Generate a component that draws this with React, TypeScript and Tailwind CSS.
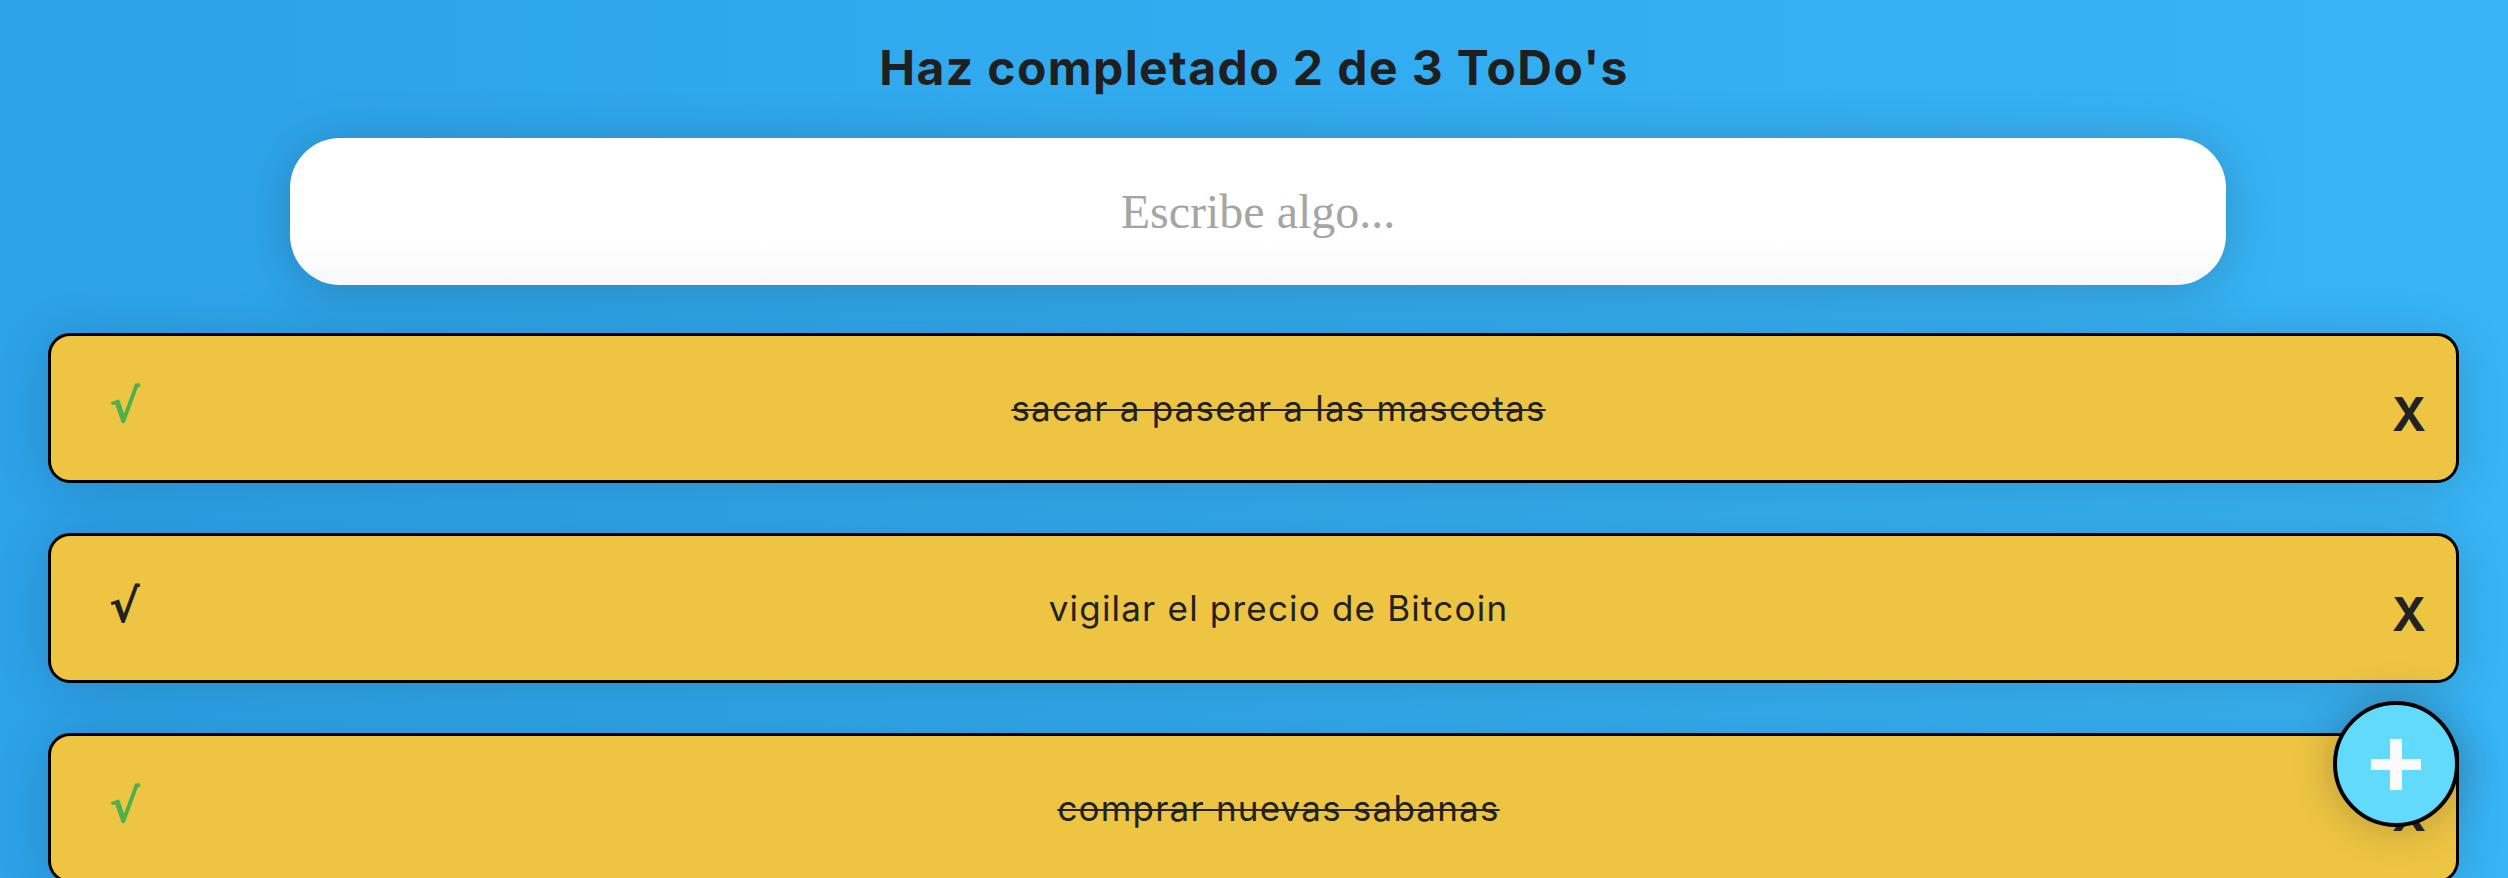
import React from "react";

type Todo = { text: string; completed: boolean };

const todos: Todo[] = [
  { text: "sacar a pasear a las mascotas", completed: true },
  { text: "vigilar el precio de Bitcoin", completed: false },
  { text: "comprar nuevas sabanas", completed: true },
];

function TodoItem({ todo }: { todo: Todo }) {
  return (
    <li className="flex h-[150px] items-center rounded-[22px] border-[3px] border-black bg-[#eec542] pl-[58px] pr-[32px] shadow-[0_5px_50px_rgba(32,35,41,0.2)]">
      <span
        className={`w-[56px] -translate-y-[2px] text-left text-[46px] font-bold leading-none ${
          todo.completed ? "text-[#4caf50]" : "text-[#222222]"
        }`}
        style={{ fontFamily: "'DejaVu Sans', sans-serif" }}
      >
        √
      </span>
      <p
        className={`flex-1 text-center text-[35px] leading-[40px] tracking-[1.2px] text-[#222222] ${
          todo.completed ? "line-through decoration-2" : ""
        }`}
      >
        {todo.text}
      </p>
      <span className="w-[32px] translate-y-[6px] text-center text-[46px] font-bold leading-none text-[#222222]">
        X
      </span>
    </li>
  );
}

export default function App() {
  return (
    <div
      className="min-h-[878px] w-full bg-gradient-to-r from-[#2ca2e9] to-[#38b5f6] pb-[80px]"
      style={{ fontFamily: "Inter, 'Noto Sans', sans-serif" }}
    >
      <h1 className="pt-[38px] text-center text-[48px] font-bold leading-[60px] tracking-[1.4px] text-[#1f1f1f]">
        Haz completado 2 de 3 ToDo's
      </h1>
      <div className="ml-[290px] mt-[40px] w-[1936px]">
        <input
          className="h-[147px] w-full rounded-[50px] bg-gradient-to-b from-white from-70% to-[#f8f8f8] text-center text-[48px] text-[#555] shadow-[0_5px_50px_rgba(32,35,41,0.25)] outline-none placeholder:text-[#a5a5a5]"
          style={{ fontFamily: "'Liberation Serif', serif" }}
          placeholder="Escribe algo..."
        />
      </div>
      <ul className="mt-[48px] flex flex-col gap-[50px] pl-[48px] pr-[49px]">
        {todos.map((t) => (
          <TodoItem key={t.text} todo={t} />
        ))}
      </ul>
      <button className="fixed bottom-[51px] right-[49px] flex h-[126px] w-[126px] items-center justify-center rounded-full border-4 border-black bg-[#61dafb] shadow-[0_0_40px_rgba(32,35,41,0.3)]">
        <span className="relative block h-[51px] w-[50px]">
          <span className="absolute left-[19px] top-0 h-[51px] w-[12px] bg-[#fafafa]" />
          <span className="absolute left-0 top-[20px] h-[11px] w-[50px] bg-[#fafafa]" />
        </span>
      </button>
    </div>
  );
}
